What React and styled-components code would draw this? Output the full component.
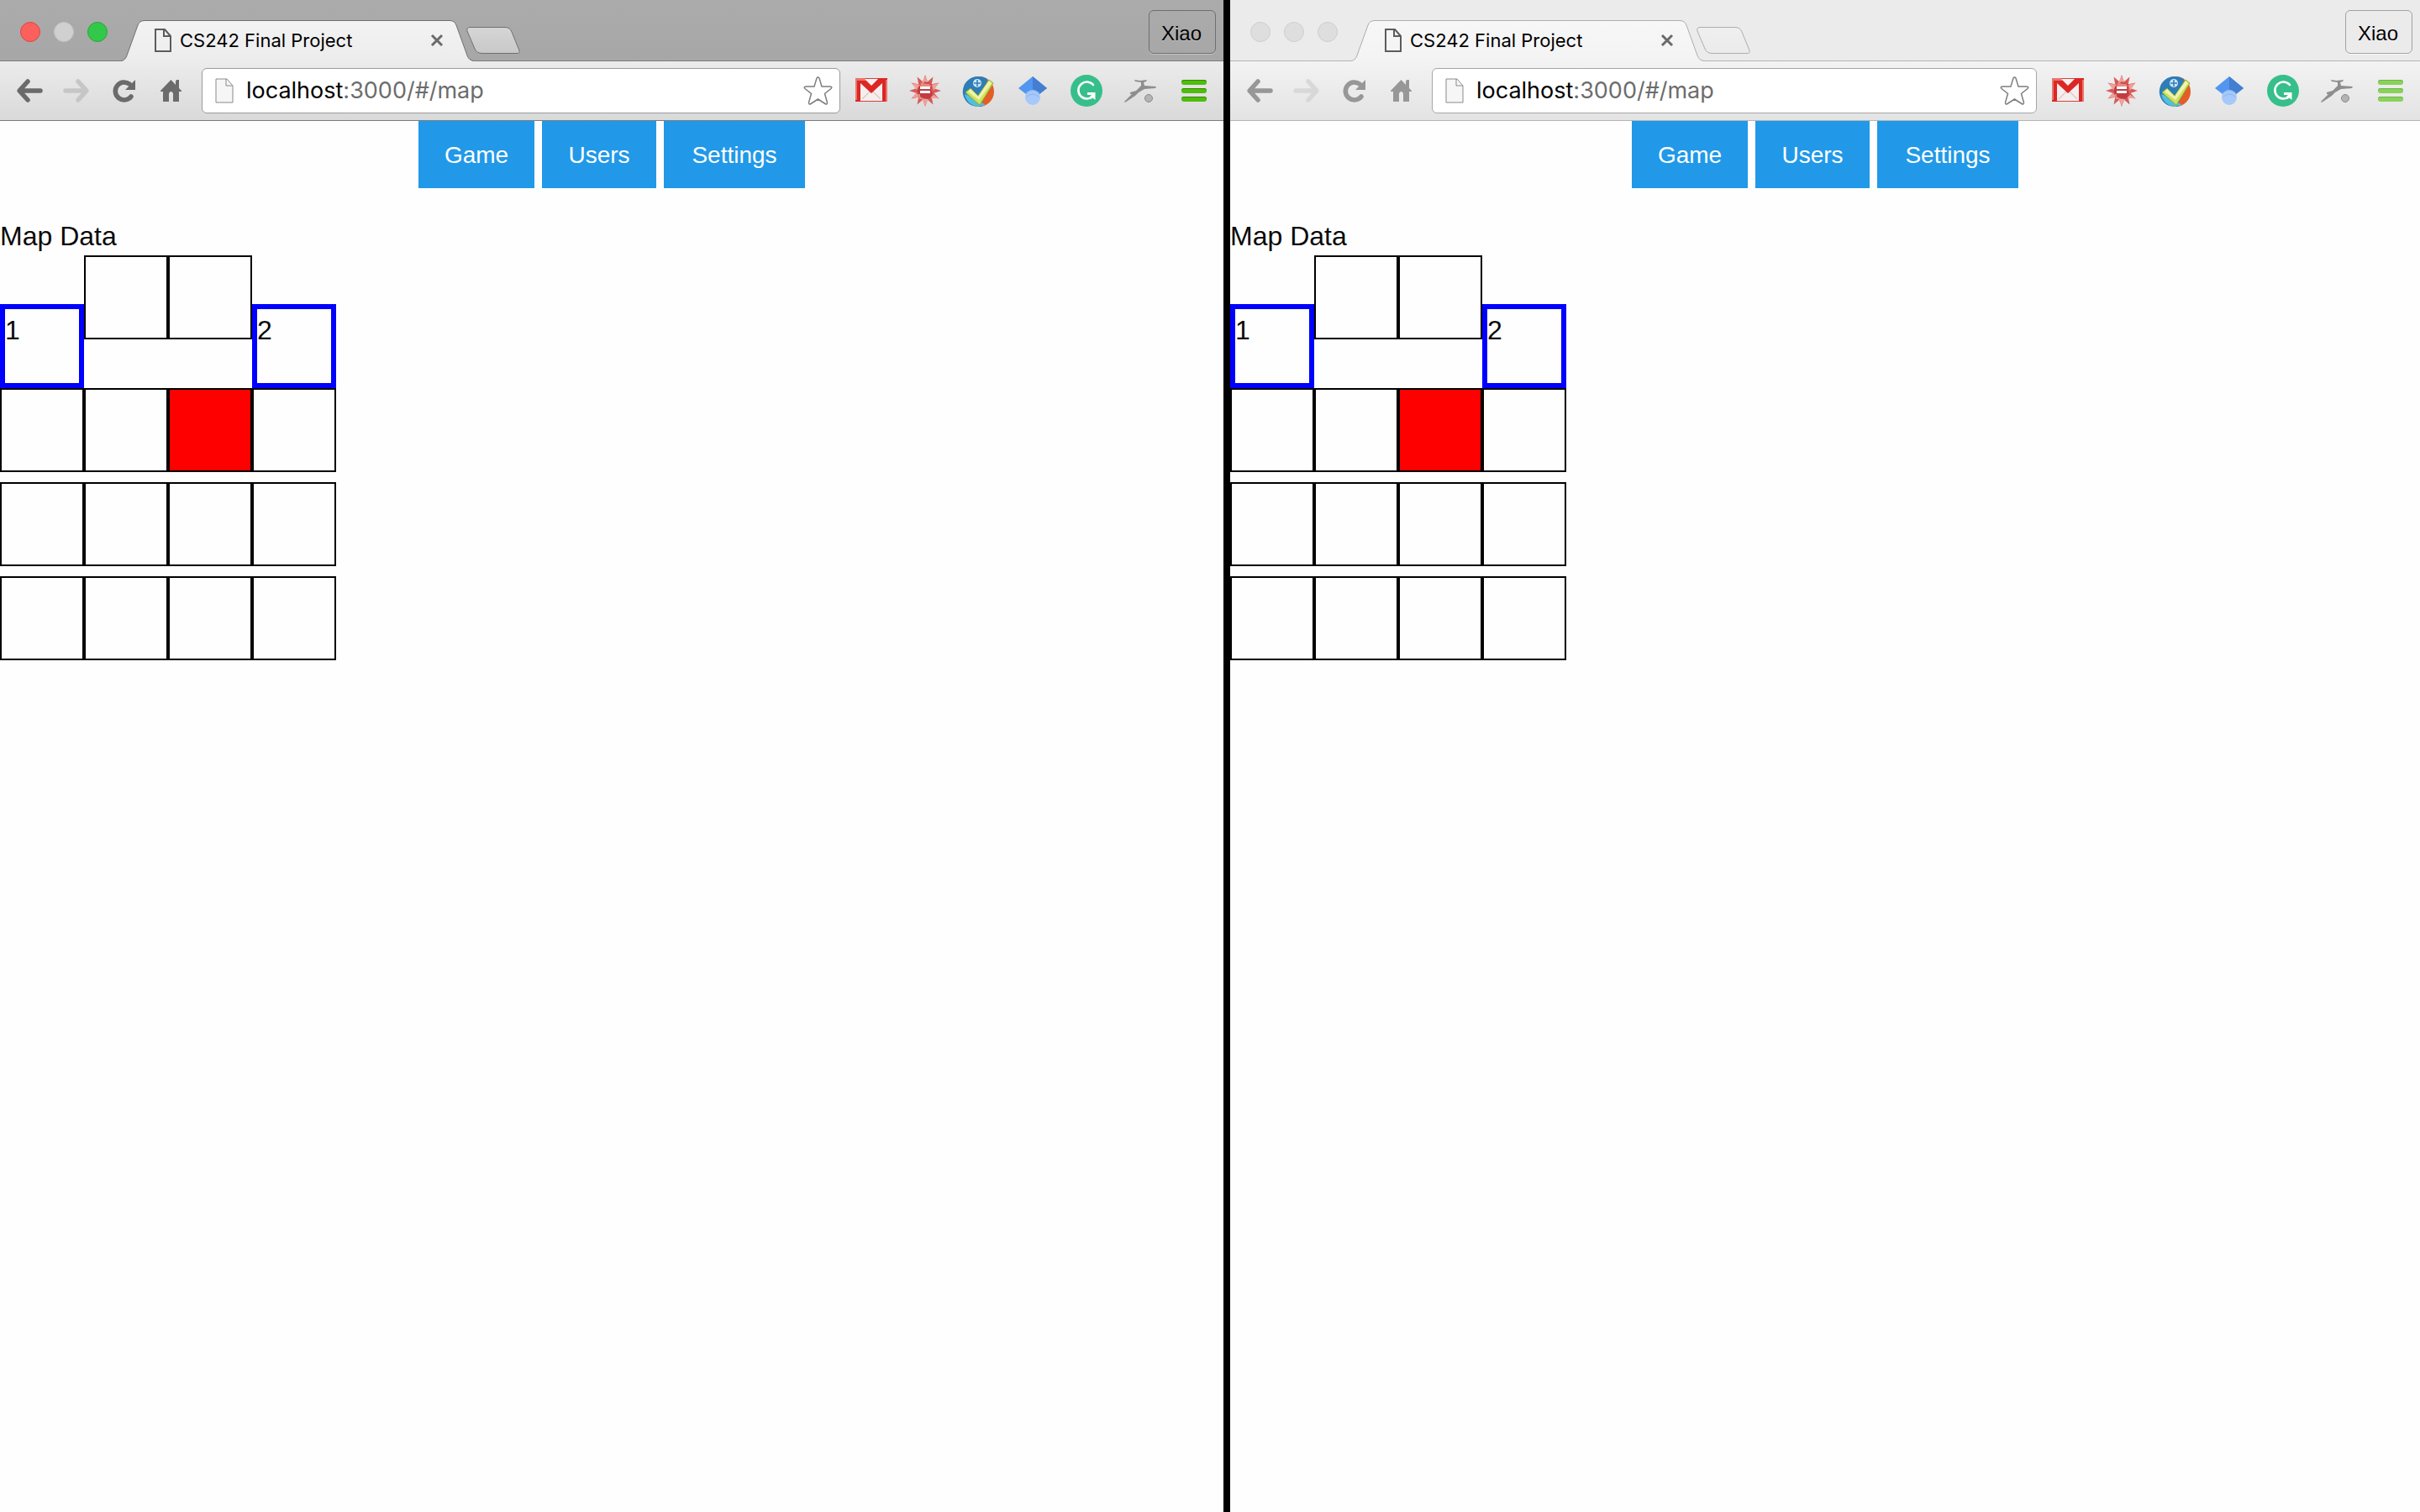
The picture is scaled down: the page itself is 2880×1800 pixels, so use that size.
import React from 'react';
import styled, { createGlobalStyle } from 'styled-components';

const themes = {
  active: {
    strip: 'linear-gradient(#ababab, #a7a7a7)', line: '#7c7c7c', outline: '#6f6f6f',
    barTop: '#ececec', barBottom: '#d9d9d9', tabTop: '#f3f3f3', plusTop: '#d6d6d6', plusBottom: '#c8c8c8',
    icon: '#6b6b6b', iconOff: '#c6c6c6', menu: '#50bc0c', menuEdge: '#2f8a06', field: '#9b9b9b', badge: '#6f6f6f', badgeShadow: '#c4c4c4',
    dots: [['#fc605c', '#de4643'], ['#d0d0d0', '#c2c2c2'], ['#34c84a', '#27a838']],
  },
  idle: {
    strip: '#ebebeb', line: '#b4b4b4', outline: '#adadad',
    barTop: '#f3f3f3', barBottom: '#e3e3e3', tabTop: '#f7f7f7', plusTop: '#efefef', plusBottom: '#ebebeb',
    icon: '#979797', iconOff: '#d8d8d8', menu: '#88d25a', menuEdge: '#6fb548', field: '#a6a6a6', badge: '#a2a2a2', badgeShadow: '#f8f8f8',
    dots: [['#dedede', '#cecece'], ['#dedede', '#cecece'], ['#dedede', '#cecece']],
  },
};

const GlobalStyle = createGlobalStyle`
  * { box-sizing: border-box; }
  body { margin: 0; background: #000; font-family: "Liberation Sans", Arial, sans-serif; }
  button, input { font: inherit; color: inherit; }
  svg { display: block; overflow: visible; }
`;

const Desktop = styled.div`
  display: grid;
  grid-template-columns: minmax(0, 1456fr) minmax(0, 1416fr);
  column-gap: 8px;
  min-height: 100vh;
`;
const Window = styled.section`
  display: flex;
  flex-direction: column;
  background: #fefefe;
`;
const TabStrip = styled.header`
  display: flex;
  align-items: flex-end;
  height: 72px;
  padding: 0 9px 0 24px;
  background: ${(p) => p.$t.strip};
`;
const Lights = styled.div`
  display: flex;
  gap: 16px;
  padding-bottom: 22px;
  margin-right: 16px;
`;
const Light = styled.button`
  width: 24px;
  height: 24px;
  padding: 0;
  border-radius: 50%;
  background: ${(p) => p.$fill};
  border: 1px solid ${(p) => p.$edge};
`;
const Tab = styled.div`
  position: relative;
  z-index: 1;
  display: flex;
  align-items: center;
  width: 420px;
  height: 48px;
  padding: 0 37px 0 40px;
`;
const TabShape = styled.svg`
  position: absolute;
  inset: 0;
`;
const TabTitle = styled.span`
  position: relative;
  flex: 1;
  margin-left: 10px;
  font: 400 22px/28px Inter, sans-serif;
  color: #000;
  white-space: nowrap;
`;
const Above = styled.span`
  position: relative;
`;
const BareButton = styled.button`
  position: relative;
  flex: none;
  padding: 0;
  border: 0;
  background: none;
`;
const NewTab = styled(BareButton)`
  margin: 0 0 7px -9px;
`;
const Profile = styled.button`
  width: 80px;
  height: 52px;
  margin: 0 0 8px auto;
  padding: 4px 2px 0 0;
  border: 1px solid ${(p) => p.$t.badge};
  border-radius: 6px;
  background: transparent;
  box-shadow: 0 1px 0 ${(p) => p.$t.badgeShadow};
  text-shadow: 0 1px 0 ${(p) => p.$t.badgeShadow};
  color: #000;
  font-size: 24px;
  line-height: 28px;
`;
const Toolbar = styled.div`
  display: flex;
  align-items: center;
  height: 72px;
  padding: 0 20px;
  border-top: 1px solid ${(p) => p.$t.line};
  border-bottom: 1px solid ${(p) => p.$t.line};
  background: linear-gradient(${(p) => p.$t.barTop}, ${(p) => p.$t.barBottom});
`;
const NavIcons = styled.nav`
  display: flex;
  gap: 24px;
  margin-right: 24px;
`;
const Address = styled.label`
  position: relative;
  display: flex;
  flex: 1;
  align-items: center;
  min-width: 0;
  height: 54px;
  padding: 0 8px 0 15px;
  border: 1px solid ${(p) => p.$t.field};
  border-radius: 6px;
  background: #fff;
`;
const Url = styled.div`
  position: relative;
  flex: 1;
  margin-left: 15px;
  font: 400 27px/36px Inter, sans-serif;
  color: #6c6c6c;
`;
const UrlInput = styled.input`
  display: block;
  width: 100%;
  padding: 0;
  border: 0;
  outline: 0;
  background: none;
  color: #6c6c6c;
`;
const Host = styled.span`
  position: absolute;
  left: 0;
  top: 0;
  color: #000;
  background: #fff;
`;
const Extensions = styled.div`
  display: flex;
  align-items: center;
  gap: 26px;
  margin-left: 18px;
`;
const MenuButton = styled(BareButton)`
  display: grid;
  gap: 4px;
  width: 30px;
  margin-left: 4px;
`;
const MenuBar = styled.span`
  height: 6px;
  border-radius: 3px;
  background: ${(p) => p.$t.menu};
  box-shadow: inset 0 1px 0 ${(p) => p.$t.menuEdge};
`;
const Tabs = styled.nav`
  display: grid;
  grid-template-columns: 138px 136px 168px;
  justify-content: center;
  gap: 9px;
`;
const TabLink = styled.a`
  padding: 23px 0 21px;
  background: #2199e8;
  color: #fefefe;
  font-size: 28px;
  line-height: 36px;
  text-align: center;
  text-decoration: none;
`;
const MapPanel = styled.main`
  padding-top: 34px;
  color: #0a0a0a;
  font-size: 32px;
  line-height: 46px;
`;
const MapRow = styled.div`
  white-space: nowrap;
`;
const tileBorders = { plain: '2px solid #000', wall: '2px solid #000', player: '6px solid #00f' };
const Tile = styled.div`
  display: inline-block;
  width: 100px;
  height: 100px;
  padding-top: 2px;
  border: ${(p) => tileBorders[p.$kind]};
  background: ${(p) => (p.$kind === 'wall' ? '#f00' : 'transparent')};
`;

const FileIcon = ({ w, h, stroke, sw, fill }) => (
  <svg width={w} height={h} viewBox={`0 0 ${w} ${h}`} fill={fill} stroke={stroke} strokeWidth={sw}>
    <path d={`M1 1H${w - 8}L${w - 1} 9V${h - 1}H1Z`} />
    <path d={`M${w - 9} 1V9H${w - 1}`} fill="none" />
  </svg>
);

const Gmail = () => (
  <svg width="38" height="38" viewBox="0 0 38 38">
    <rect y="4" width="38" height="28" fill="#d3413c" />
    <path d="M6 5H32L36 31H3Z" fill="#f6eeee" />
    <path d="M8 29l8-8q3-2 6 0l8 8" fill="none" stroke="#dccccc" strokeWidth="1.5" />
    <path d="M0 4H11L19 12 27 4H38V32H32V10L19 22 6 10V32H0Z" fill="#dc2723" />
    <path d="M0 4H11L14 7H2V30H0ZM36 6H38V32H36Z" fill="#e8756f" />
    <path d="M11 5H27L19 13Z" fill="#f8f0f0" />
  </svg>
);

const burst = Array.from({ length: 24 }, (_, i) => {
  const r = i % 2 ? 11 : 19;
  const a = (i * Math.PI) / 12 - Math.PI / 2;
  return `${19 + r * Math.cos(a)},${19 + r * Math.sin(a)}`;
}).join(' ');
const Burst = () => (
  <svg width="38" height="38" viewBox="0 0 38 38">
    <polygon points={burst} fill="#d65a58" />
    <path d="M19 1L22 9 14 12ZM3 10L13 12 9 18ZM35 10L27 12 29 19ZM3 28L13 26 10 20ZM19 37L23 29 15 28ZM35 28L27 22 26 28Z" fill="#f0a09a" />
    <path d="M19 8L27 12 26 18 29 24 23 29 14 28 9 22 11 14Z" fill="#b9333a" opacity=".75" />
    <path d="M14 10L24 11 27 14H13ZM11 23H13V26L18 29 12 29Z" fill="#e88a84" />
    <path d="M13 14H25V17H13ZM13 19H25V22H13Z" fill="#fff" />
  </svg>
);

const Check = () => (
  <svg width="38" height="38" viewBox="0 0 38 38">
    <circle cx="19" cy="20" r="18" fill="#e45d27" />
    <path d="M19 2A18 18 0 0 0 12 37L22 38 28 14 29 5Q24 2 19 2Z" fill="#2d7db8" />
    <path d="M2 23Q4 35 17 38L27 36 13 27Z" fill="#54bede" />
    <circle cx="17" cy="10" r="5" fill="#cfe5f4" />
    <path d="M17 6V14M13 10H21" stroke="#2d7db8" strokeWidth="1.5" />
    <path d="M3 21L9 16 18 25 31 6 36 10 20 36Z" fill="#cfe35a" stroke="#8fae35" />
    <path d="M9 17L18 26 31 7 34 10 19 30 6 20Z" fill="#eef3b4" />
  </svg>
);

const Scholar = () => (
  <svg width="38" height="38" viewBox="0 0 38 38">
    <path d="M19 2L36 16 27 23H11L2 16Z" fill="#5296f0" />
    <path d="M19 2L36 16 27 23 19 17Z" fill="#437ed0" />
    <circle cx="19" cy="27" r="9" fill="#a6c8fa" />
    <path d="M11 22Q19 15 27 22M12 26Q19 20 26 26" fill="none" stroke="#8cb4f2" />
  </svg>
);

const Grammarly = () => (
  <svg width="38" height="38" viewBox="0 0 38 38">
    <circle cx="19" cy="19" r="19" fill="#36bf8a" />
    <path d="M27 12A10 10 0 1 0 26 26" fill="none" stroke="#fff" strokeWidth="2.6" strokeLinecap="round" />
    <path d="M20 21H29.500V30L26.500 27.500 24 29 23 26 25 24H20Z" fill="#fff" />
  </svg>
);

const Runner = () => (
  <svg width="38" height="38" viewBox="0 0 38 38">
    <path d="M12 6L19 7 27 6 26 8 23 9 24 13 38 14 37 16 24 17 17 21 13 25 1 33 0 32 9 23 7 23 7 21 14 19 20 13 20 9 13 8Z" fill="#8e8e8e" />
    <circle cx="29" cy="28" r="4.5" fill="#b4b4b4" stroke="#8a8a8a" />
  </svg>
);

const extensions = [
  ['Mail', Gmail],
  ['Burst', Burst],
  ['Check', Check],
  ['Scholar', Scholar],
  ['Grammar', Grammarly],
  ['Runner', Runner],
];

const plain = { kind: 'plain' };
const mapData = [
  [{ kind: 'player', label: '1' }, plain, plain, { kind: 'player', label: '2' }],
  [plain, plain, { kind: 'wall' }, plain],
  [plain, plain, plain, plain],
  [plain, plain, plain, plain],
];

const Browser = ({ theme: t, id }) => (
  <Window>
    <TabStrip $t={t}>
      <Lights>
        {t.dots.map(([fill, edge], i) => (
          <Light key={i} $fill={fill} $edge={edge} aria-label={['Close', 'Minimize', 'Zoom'][i]} />
        ))}
      </Lights>
      <Tab>
        <TabShape width="420" height="50" viewBox="0 0 420 50">
          <defs>
            <linearGradient id={id} x1="0" y1="0" x2="0" y2="1">
              <stop offset="0" stopColor={t.tabTop} />
              <stop offset="1" stopColor={t.barTop} />
            </linearGradient>
          </defs>
          <path d="M0 50V48.500Q5 48 7 42L20 6Q22 .5 28 .5H391Q397 .5 399 6L412 42Q414 48 420 48.500V50Z" fill={`url(#${id})`} />
          <path d="M0 48.500Q5 48 7 42L20 6Q22 .5 28 .5H391Q397 .5 399 6L412 42Q414 48 420 48.500" fill="none" stroke={t.outline} />
        </TabShape>
        <Above><FileIcon w={20} h={28} stroke="#5c5c5c" sw={2} fill="none" /></Above>
        <TabTitle>CS242 Final Project</TabTitle>
        <BareButton aria-label="Close tab">
          <svg width="14" height="14" viewBox="0 0 14 14" stroke="#6a6a6a" strokeWidth="3"><path d="M1 1L13 13M13 1L1 13" /></svg>
        </BareButton>
      </Tab>
      <NewTab aria-label="New tab">
        <svg width="64" height="33" viewBox="0 0 64 33">
          <defs>
            <linearGradient id={`${id}-new`} x1="0" y1="0" x2="0" y2="1">
              <stop offset="0" stopColor={t.plusTop} />
              <stop offset="1" stopColor={t.plusBottom} />
            </linearGradient>
          </defs>
          <path d="M4 .5H46Q52 .5 54 6L63 28Q64 31.500 60 31.500H19Q12 31.500 10 26L1 5Q0 .5 4 .5Z" fill={`url(#${id}-new)`} stroke={t.outline} />
        </svg>
      </NewTab>
      <Profile $t={t}>Xiao</Profile>
    </TabStrip>
    <Toolbar $t={t}>
      <NavIcons>
        <BareButton aria-label="Back">
          <svg width="31" height="28" viewBox="0 0 31 28" fill="none" stroke={t.icon} strokeWidth="5.5" strokeLinecap="round" strokeLinejoin="round"><path d="M4 14H28M13 3L3 14 13 25" /></svg>
        </BareButton>
        <BareButton aria-label="Forward">
          <svg width="31" height="28" viewBox="0 0 31 28" fill="none" stroke={t.iconOff} strokeWidth="5.5" strokeLinecap="round" strokeLinejoin="round"><path d="M3 14H27M18 3L28 14 18 25" /></svg>
        </BareButton>
        <BareButton aria-label="Reload">
          <svg width="35" height="28" viewBox="-4 0 35 28"><path d="M22 21A10.500 10.500 0 1 1 20 6" fill="none" stroke={t.icon} strokeWidth="5.500" strokeLinecap="round" /><path d="M27 1V13H15Z" fill={t.icon} /></svg>
        </BareButton>
        <BareButton aria-label="Home">
          <svg width="27" height="28" viewBox="-2 0 27 28" fill={t.icon}><path d="M12.500 1L18 7V3L19 1H22V11L25 14V15H22V27H15V17Q12.500 13 10 17V27H3V15H0V14Z" /></svg>
        </BareButton>
      </NavIcons>
      <Address $t={t}>
        <FileIcon w={22} h={30} stroke="#8a8a8a" sw={1} fill="#f6f6f6" />
        <Url>
          <UrlInput aria-label="Address" defaultValue="localhost:3000/#/map" />
          <Host aria-hidden="true">localhost</Host>
        </Url>
        <BareButton aria-label="Bookmark">
          <svg width="35" height="34" viewBox="0 0 35 34"><path d="M17.500 1Q18.500 1 19 2L22 12H32Q35 12.500 33 14.500L25.500 20.500 28.500 31Q28.500 34 26 32.500L17.500 27 9 32.500Q6.500 34 6.500 31L9.500 20.500 2 14.500Q0 12.500 3 12H13L16 2Q16.500 1 17.500 1Z" fill="#fff" stroke="#7e7e7e" strokeWidth="1.500" /></svg>
        </BareButton>
      </Address>
      <Extensions>
        {extensions.map(([name, Icon]) => (
          <BareButton key={name} aria-label={name}><Icon /></BareButton>
        ))}
        <MenuButton aria-label="Menu">
          <MenuBar $t={t} /><MenuBar $t={t} /><MenuBar $t={t} />
        </MenuButton>
      </Extensions>
    </Toolbar>
    <Tabs>
      <TabLink href="#/game">Game</TabLink>
      <TabLink href="#/users">Users</TabLink>
      <TabLink href="#/settings">Settings</TabLink>
    </Tabs>
    <MapPanel>
      <div>Map Data</div>
      {mapData.map((row, y) => (
        <MapRow key={y}>
          {row.map((cell, x) => (
            <Tile key={x} $kind={cell.kind}>{cell.label}</Tile>
          ))}
        </MapRow>
      ))}
    </MapPanel>
  </Window>
);

export default function App() {
  return (
    <>
      <GlobalStyle />
      <Desktop>
        <Browser theme={themes.active} id="tab-active" />
        <Browser theme={themes.idle} id="tab-idle" />
      </Desktop>
    </>
  );
}
